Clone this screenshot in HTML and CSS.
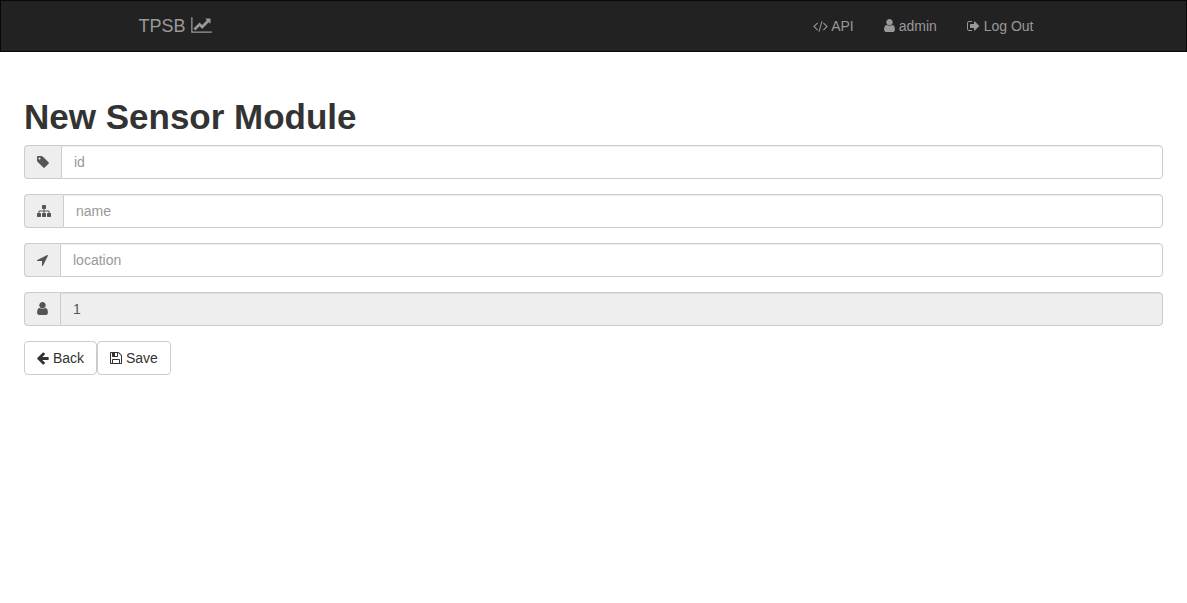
FILE: index.html
```html
<!DOCTYPE html>
<html lang="en">
<head>
<meta charset="utf-8">
<meta name="viewport" content="width=device-width, initial-scale=1">
<title>New Sensor Module</title>
<link rel="stylesheet" href="styles.css">
</head>
<body>
<nav class="navbar">
  <div class="navbar-inner">
    <a class="brand" href="#">TPSB <svg class="icon icon-chart" viewBox="0 0 2048 1792" aria-hidden="true"><path d="M2048 1536v128h-2048v-1536h128v1408h1920zm-128-1248v435q0 21-19.5 29.5t-35.5-7.5l-121-121-633 633q-10 10-23 10t-23-10l-233-233-416 416-192-192 585-585q10-10 23-10t23 10l233 233 464-464-121-121q-16-16-7.5-35.5t29.5-19.500h435q14 0 23 9t9 23z"/></svg></a>
    <ul class="nav-links">
      <li><a href="#"><svg class="icon icon-code" viewBox="0 0 1920 1792" aria-hidden="true"><path d="M617 1399l-50 50q-10 10-23 10t-23-10l-466-466q-10-10-10-23t10-23l466-466q10-10 23-10t23 10l50 50q10 10 10 23t-10 23l-393 393 393 393q10 10 10 23t-10 23zm591-1067l-373 1291q-4 13-15.500 19.500t-23.500 2.500l-62-17q-13-4-19.500-15.500t-2.500-24.500l373-1291q4-13 15.500-19.500t23.500-2.500l62 17q13 4 19.500 15.500t2.500 24.500zm657 651l-466 466q-10 10-23 10t-23-10l-50-50q-10-10-10-23t10-23l393-393-393-393q-10-10-10-23t10-23l50-50q10-10 23-10t23 10l466 466q10 10 10 23t-10 23z"/></svg> API</a></li>
      <li><a href="#"><svg class="icon icon-user" viewBox="256 128 1280 1664" aria-hidden="true"><path d="M1536 1399q0 109-62.500 187t-150.500 78h-854q-88 0-150.500-78t-62.500-187q0-85 8.500-160.500t31.500-152 58.500-131 94-89 134.500-34.500q131 128 313 128t313-128q76 0 134.500 34.500t94 89 58.500 131 31.500 152 8.500 160.500zm-256-887q0 159-112.500 271.500t-271.500 112.500-271.500-112.500-112.500-271.500 112.500-271.500 271.500-112.500 271.500 112.500 112.500 271.500z"/></svg> admin</a></li>
      <li><a href="#"><svg class="icon icon-exit" viewBox="64 0 1664 1792" aria-hidden="true"><path d="M704 1440q0 4 1 20t.5 26.500-3 23.500-10 19.500-20.500 6.500h-320q-119 0-203.500-84.500t-84.500-203.500v-704q0-119 84.500-203.500t203.500-84.500h320q13 0 22.500 9.500t9.500 22.500q0 4 1 20t.5 26.500-3 23.500-10 19.500-20.500 6.500h-320q-66 0-113 47t-47 113v704q0 66 47 113t113 47h312l11.500 1 11.500 3 8 5.500 7 9 2 13.500zm928-544q0 26-19 45l-544 544q-19 19-45 19t-45-19-19-45v-288h-448q-26 0-45-19t-19-45v-384q0-26 19-45t45-19h448v-288q0-26 19-45t45-19 45 19l544 544q19 19 19 45z"/></svg> Log Out</a></li>
    </ul>
  </div>
</nav>
<main class="content">
  <h1 class="title">New Sensor Module</h1>
  <form class="sensor-form">
    <div class="input-group">
      <label class="addon" for="id"><svg class="icon" viewBox="128 0 1536 1792" aria-hidden="true"><path d="M576 448q0-53-37.500-90.500t-90.500-37.500-90.500 37.500-37.500 90.500 37.500 90.500 90.500 37.500 90.500-37.500 37.500-90.500zm1067 576q0 53-37 90l-491 492q-39 37-91 37-53 0-90-37l-715-716q-38-37-64.500-101t-26.500-117v-416q0-52 38-90t90-38h416q53 0 117 26.500t102 64.500l715 714q37 39 37 91z"/></svg></label>
      <input class="field" id="id" type="text" placeholder="id" aria-label="id">
    </div>
    <div class="input-group">
      <label class="addon" for="name"><svg class="icon icon-wide" viewBox="0 0 1792 1792" aria-hidden="true"><path d="M1792 1248v320q0 40-28 68t-68 28h-320q-40 0-68-28t-28-68v-320q0-40 28-68t68-28h96v-192h-512v192h96q40 0 68 28t28 68v320q0 40-28 68t-68 28h-320q-40 0-68-28t-28-68v-320q0-40 28-68t68-28h96v-192h-512v192h96q40 0 68 28t28 68v320q0 40-28 68t-68 28h-320q-40 0-68-28t-28-68v-320q0-40 28-68t68-28h96v-192q0-52 38-90t90-38h512v-192h-96q-40 0-68-28t-28-68v-320q0-40 28-68t68-28h320q40 0 68 28t28 68v320q0 40-28 68t-68 28h-96v192h512q52 0 90 38t38 90v192h96q40 0 68 28t28 68z"/></svg></label>
      <input class="field" id="name" type="text" placeholder="name" aria-label="name">
    </div>
    <div class="input-group">
      <label class="addon" for="location"><svg class="icon icon-narrow" viewBox="192 0 1408 1792" aria-hidden="true"><path d="M1593 349l-640 1280q-17 35-57 35-5 0-15-2-22-5-35.500-22.500t-13.500-39.500v-576h-576q-22 0-39.500-13.500t-22.500-35.500 4-42 29-30l1280-640q13-7 29-7 27 0 45 19 15 14 18.500 34.500t-6.500 39.500z"/></svg></label>
      <input class="field" id="location" type="text" placeholder="location" aria-label="location">
    </div>
    <div class="input-group">
      <label class="addon" for="user"><svg class="icon icon-user" viewBox="256 128 1280 1664" aria-hidden="true"><path d="M1536 1399q0 109-62.500 187t-150.500 78h-854q-88 0-150.500-78t-62.500-187q0-85 8.500-160.500t31.500-152 58.500-131 94-89 134.500-34.500q131 128 313 128t313-128q76 0 134.500 34.500t94 89 58.500 131 31.500 152 8.500 160.500zm-256-887q0 159-112.500 271.500t-271.500 112.500-271.500-112.500-112.500-271.500 112.500-271.500 271.500-112.500 271.500 112.500 112.500 271.500z"/></svg></label>
      <input class="field" id="user" type="text" value="1" aria-label="user" readonly>
    </div>
    <div class="actions">
      <button class="btn" type="button"><svg class="icon" viewBox="160 0 1536 1792" aria-hidden="true"><path d="M1664 896v128q0 53-32.500 90.500t-84.500 37.500h-704l293 294q38 36 38 90t-38 90l-75 76q-37 37-90 37-52 0-91-37l-651-652q-37-37-37-90 0-52 37-91l651-650q38-38 91-38 52 0 90 38l75 74q38 38 38 91t-38 91l-293 293h704q52 0 84.500 37.500t32.500 90.500z"/></svg> Back</button>
      <button class="btn" type="submit"><svg class="icon" viewBox="128 0 1536 1792" aria-hidden="true"><path d="M512 1536h768v-384h-768v384zm896 0h128v-896q0-14-10-38.500t-20-34.500l-281-281q-10-10-34-20t-39-10v416q0 40-28 68t-68 28h-576q-40 0-68-28t-28-68v-416h-128v1280h128v-416q0-40 28-68t68-28h832q40 0 68 28t28 68v416zm-384-928v-320q0-13-9.500-22.500t-22.500-9.500h-192q-13 0-22.500 9.500t-9.500 22.500v320q0 13 9.500 22.500t22.500 9.500h192q13 0 22.500-9.500t9.500-22.500zm640 32v928q0 40-28 68t-68 28h-1344q-40 0-68-28t-28-68v-1344q0-40 28-68t68-28h928q40 0 88 20t76 48l280 280q28 28 48 76t20 88z"/></svg> Save</button>
    </div>
  </form>
</main>
</body>
</html>
```
FILE: styles.css
```css
* {
  box-sizing: border-box;
}

body {
  margin: 0;
  background: #fff;
  color: #333;
  font-family: "Helvetica Neue", Helvetica, "Liberation Sans", Arial, sans-serif;
  font-size: 14px;
  line-height: 20px;
}

.icon {
  width: 12px;
  height: 14px;
  fill: currentColor;
  vertical-align: -2px;
}

.icon-narrow {
  width: 11px;
}

.icon-user {
  width: 11px;
}

.icon-exit {
  width: 13px;
}

.icon-wide {
  width: 14px;
}

.icon-code {
  width: 15px;
}

.icon-chart {
  width: 21px;
  height: 18px;
}

.navbar {
  background: #222;
  border: 1px solid #080808;
}

.navbar-inner {
  display: flex;
  justify-content: space-between;
  max-width: 940px;
  margin: 0 auto;
  padding: 0 15px;
}

.navbar a {
  color: #999;
  text-decoration: none;
}

.navbar a:hover {
  color: #fff;
}

.brand {
  padding: 15px 0;
  font-size: 18px;
}

.nav-links {
  display: flex;
  gap: 30px;
  margin: 0;
  padding: 0 15px;
  list-style: none;
}

.nav-links a {
  display: block;
  padding: 15px 0;
}

.content {
  padding: 45px 24px 24px;
}

.title {
  margin: 0 0 8px;
  font-size: 35px;
  font-weight: bold;
  line-height: 40px;
}

.input-group {
  display: flex;
  margin-bottom: 15px;
}

.addon {
  padding: 6px 12px;
  border: 1px solid #ccc;
  border-right: 0;
  border-radius: 4px 0 0 4px;
  background: #eee;
  color: #555;
}

.field {
  flex: 1;
  min-width: 0;
  height: 34px;
  padding: 6px 12px;
  border: 1px solid #ccc;
  border-radius: 0 4px 4px 0;
  background: #fff;
  box-shadow: inset 0 1px 1px rgba(0, 0, 0, 0.075);
  color: #555;
  font: inherit;
}

.field::placeholder {
  color: #999;
}

.field:read-only {
  background: #eee;
}

.actions {
  display: flex;
}

.btn {
  padding: 6px 12px;
  border: 1px solid #ccc;
  border-radius: 4px;
  background: #fff;
  color: #333;
  font: inherit;
  cursor: pointer;
}
```
